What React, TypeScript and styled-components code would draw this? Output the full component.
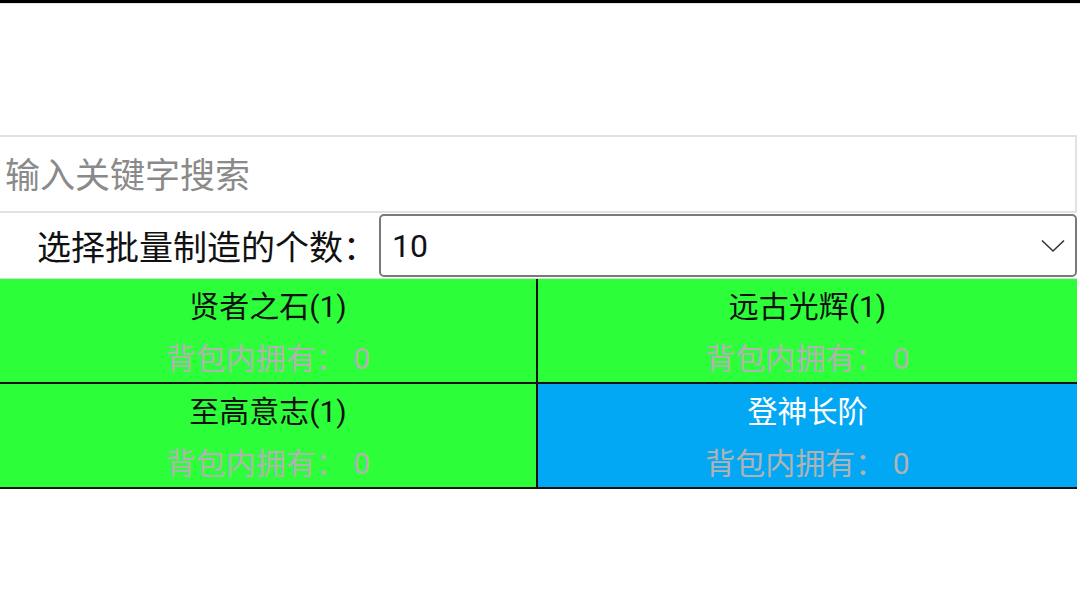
import React from 'react';
import styled, { createGlobalStyle } from 'styled-components';

const GlobalStyle = createGlobalStyle`
  html, body {
    margin: 0;
    padding: 0;
    background: #fff;
    font-family: Roboto, "Noto Sans CJK SC", sans-serif;
    color: #111;
  }
`;

const StatusBar = styled.div`
  height: 3px;
  background: #000;
  border-bottom: 1px solid #e4e4e4;
`;

const Page = styled.main`
  width: 1077px;
  padding-top: 131px;
`;

const SearchInput = styled.input`
  display: block;
  box-sizing: border-box;
  width: 100%;
  height: 78px;
  margin: 0;
  padding: 4px 0 0 5px;
  border: 2px solid #e2e2e2;
  border-left: none;
  outline: none;
  font-family: inherit;
  font-size: 35px;
  color: #222;
  background: #fff;

  &::placeholder {
    color: #8a8a8a;
  }
`;

const SelectRow = styled.div`
  display: flex;
  align-items: center;
  gap: 2px;
  height: 65px;
  border-bottom: 1px solid #dcdcdc;
`;

const Label = styled.span`
  padding-left: 37px;
  font-size: 34px;
  white-space: nowrap;
  color: #111;
`;

const SelectBox = styled.div`
  flex: 1;
  box-sizing: border-box;
  height: 63px;
  display: flex;
  align-items: center;
  justify-content: space-between;
  padding: 0 10px 0 11px;
  border: 2px solid #7a7a7a;
  border-radius: 5px;
  font-size: 32px;
  color: #111;
`;

const Grid = styled.div`
  display: grid;
  grid-template-columns: 538px 1fr;
`;

const Cell = styled.div<{ $bg: string; $divider?: boolean }>`
  box-sizing: border-box;
  height: 105px;
  display: flex;
  flex-direction: column;
  align-items: center;
  padding-top: 9px;
  gap: 13px;
  background: ${(p) => p.$bg};
  border-bottom: 2px solid #111;
  border-right: ${(p) => (p.$divider ? '2px solid #111' : 'none')};
`;

const Title = styled.span<{ $light?: boolean }>`
  font-size: 30px;
  line-height: 38px;
  color: ${(p) => (p.$light ? '#ffffff' : '#111')};
`;

const Owned = styled.span`
  font-size: 30px;
  line-height: 40px;
  color: #b2b2b2;
`;

const GREEN = '#2cff3a';
const BLUE = '#03a8f4';

const items = [
  { name: '贤者之石(1)', bg: GREEN },
  { name: '远古光辉(1)', bg: GREEN },
  { name: '至高意志(1)', bg: GREEN },
  { name: '登神长阶', bg: BLUE, light: true },
];

function Chevron() {
  return (
    <svg width="24" height="14" viewBox="0 0 24 14" fill="none">
      <path d="M1 1.5 L12 12 L23 1.5" stroke="#333" strokeWidth="1.6" />
    </svg>
  );
}

export default function App() {
  return (
    <>
      <GlobalStyle />
      <StatusBar />
      <Page>
        <SearchInput placeholder="输入关键字搜索" />
        <SelectRow>
          <Label>选择批量制造的个数：</Label>
          <SelectBox>
            <span>10</span>
            <Chevron />
          </SelectBox>
        </SelectRow>
        <Grid>
          {items.map((it, i) => (
            <Cell key={it.name} $bg={it.bg} $divider={i % 2 === 0}>
              <Title $light={it.light}>{it.name}</Title>
              <Owned>背包内拥有：&nbsp;0</Owned>
            </Cell>
          ))}
        </Grid>
      </Page>
    </>
  );
}
